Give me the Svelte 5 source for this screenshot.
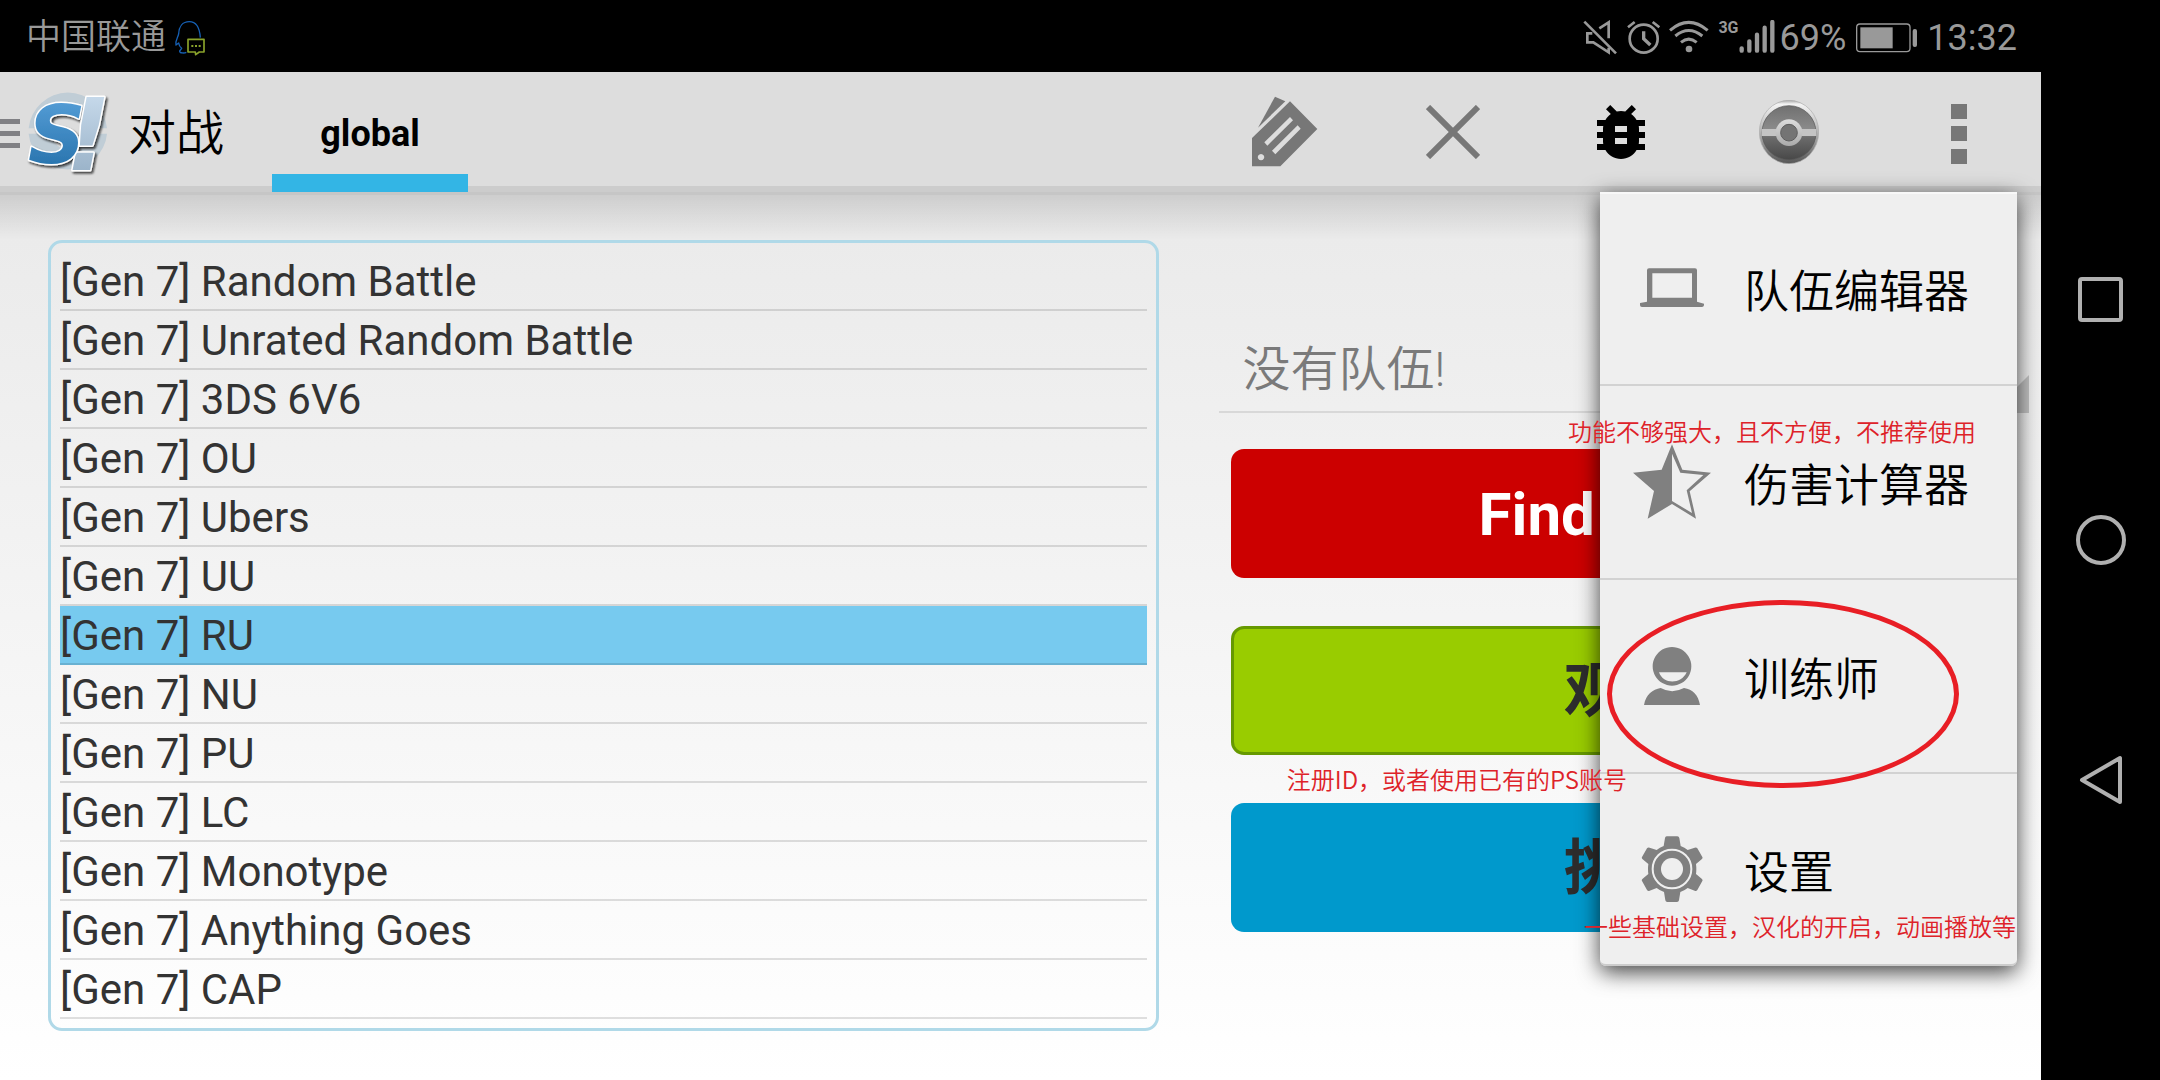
<script>
  const formats = [
    'Random Battle', 'Unrated Random Battle', '3DS 6V6', 'OU', 'Ubers', 'UU', 'RU',
    'NU', 'PU', 'LC', 'Monotype', 'Anything Goes', 'CAP'
  ];
  let selected = $state('RU');

  const menu = [
    { icon: 'laptop', label: '队伍编辑器' },
    { icon: 'star', label: '伤害计算器' },
    { icon: 'person', label: '训练师' },
    { icon: 'gear', label: '设置' }
  ];
</script>

<div class="device">
  <div class="screen">
    <header class="status">
      <div class="carrier">
        <span>中国联通</span>
        <svg width="32" height="36" viewBox="525 57 96 108" fill="none" stroke-linejoin="round">
          <path d="M604 110C602 80 592 62 571 62C550 62 540 78 539 98C538 108 528 118 531 132L539 126C540 134 543 138 548 142L542 150C541 157 556 157 562 154" stroke="#1660b4" stroke-width="4" />
          <path d="M567 115H615V153H601L590 161L589 153H567Z" stroke="#8aa32b" stroke-width="5" />
          <path d="M577 135h6M588 135h6M599 135h6" stroke="#8aa32b" stroke-width="6" />
        </svg>
      </div>
      <div class="indicators">
        <svg width="34" height="36" viewBox="137 57 102 108" fill="none" stroke="#999" stroke-width="8">
          <path d="M141 62L236 157" />
          <path d="M165 97H150V124H168L214 154V140M186 82L214 64V112" />
        </svg>
        <svg class="alarm" width="34" height="36" viewBox="269 57 102 108" fill="none" stroke="#999" stroke-width="8">
          <circle cx="319" cy="113" r="42" />
          <path d="M319 91V113L339 132" stroke-width="10" />
          <path d="M272 79L292 63M346 63L366 79" />
        </svg>
        <svg class="wifi" width="40" height="36" viewBox="397 57 120 108" fill="none" stroke="#999" stroke-width="9">
          <path d="M400 88Q456 40 513 88M416 105Q456 72 497 105M433 124Q456 105 480 124" />
          <circle cx="457" cy="144" r="10" fill="#999" stroke="none" />
        </svg>
        <div class="mobile">
          <span class="net">3G</span>
          <svg width="36" height="36" viewBox="599 57 108 108" stroke="#999" stroke-width="13" stroke-linecap="round">
            <path d="M607 142V149M630 121V149M653 101V149M676 80V149M699 63V149" />
          </svg>
        </div>
        <span class="percent">69%</span>
        <svg class="battery" width="62" height="30" viewBox="949 68 186 90" fill="none">
          <rect x="951" y="71" width="160" height="83" rx="10" stroke="#999" stroke-width="4" />
          <rect x="962" y="81" width="97" height="63" fill="#999" />
          <rect x="1119" y="86" width="13" height="54" rx="6" fill="#999" />
        </svg>
        <time>13:32</time>
      </div>
    </header>

    <div class="bar">
      <button class="home" aria-label="Navigation">
        <svg width="20" height="30" viewBox="0 0 20 30" fill="#808084">
          <path d="M0 0H20V5H0ZM0 12H20V17H0ZM0 24H20V29H0Z" />
        </svg>
        <svg class="logo" width="86" height="86" viewBox="78 270 258 258">
          <defs>
            <linearGradient id="blue" x1="0" y1="0" x2="0" y2="1">
              <stop offset="0" stop-color="#5ba3dc" /><stop offset="1" stop-color="#1f6ba5" />
            </linearGradient>
            <linearGradient id="pale" x1="0" y1="0" x2="0" y2="1">
              <stop offset="0" stop-color="#d0e2f2" /><stop offset="1" stop-color="#8fa9c0" />
            </linearGradient>
            <filter id="drop" x="-20%" y="-20%" width="150%" height="150%">
              <feDropShadow dx="5" dy="6" stdDeviation="3" flood-color="#111" flood-opacity="0.8" />
            </filter>
          </defs>
          <path d="M86 388A118 118 0 0 1 321 388H250A47 47 0 0 0 156 388ZM86 404H156A47 47 0 0 0 250 404H321A118 118 0 0 1 86 404Z" fill="#c0cdd6" />
          <g class="mark" filter="url(#drop)" stroke="#fff" stroke-width="9" stroke-linejoin="round" paint-order="stroke">
            <text x="197" y="512" font-size="298" fill="url(#pale)">!</text>
            <text x="84" y="493" font-size="240" fill="url(#blue)">S</text>
          </g>
        </svg>
      </button>
      <h1>对战</h1>
      <button class="tab">global</button>
      <div class="actions">
        <button aria-label="Tags">
          <svg width="66" height="72" viewBox="156 80 198 216" fill="#777">
            <path d="M225 82L256 96L174 175Z" />
            <path fill-rule="evenodd" d="M270 96L352 179L241 291H156V206ZM270 143L193 219L202 229L279 153ZM293 168L216 244L226 255L302 178ZM183 254a9.500 9.500 0 1 0 .1 0Z" />
          </svg>
        </button>
        <button aria-label="Close">
          <svg width="54" height="54" viewBox="0 0 54 54" stroke="#777" stroke-width="6"><path d="M2 2L52 52M52 2L2 52" /></svg>
        </button>
        <button aria-label="Debug">
          <svg width="48" height="54" viewBox="4 3 16 18">
            <path d="M20 8h-2.810c-.45-.78-1.070-1.450-1.820-1.960L17 4.410 15.590 3l-2.170 2.170C12.960 5.060 12.490 5 12 5c-.49 0-.96.06-1.410.17L8.410 3 7 4.410l1.620 1.630C7.880 6.550 7.260 7.220 6.810 8H4v2h2.090c-.05.33-.09.66-.09 1v1H4v2h2v1c0 .34.04.67.09 1H4v2h2.810c1.040 1.790 2.970 3 5.190 3s4.150-1.210 5.190-3H20v-2h-2.090c.05-.33.09-.66.09-1v-1h2v-2h-2v-1c0-.34-.04-.67-.09-1H20V8zm-6 8h-4v-2h4v2zm0-4h-4v-2h4v2z" />
          </svg>
        </button>
        <button aria-label="Battle">
          <svg width="60" height="64" viewBox="657 299 180 192">
            <defs>
              <linearGradient id="rim" x1="0" y1="0" x2="0" y2="1">
                <stop offset="0" stop-color="#aaa" /><stop offset=".06" stop-color="#f4f4f4" />
                <stop offset=".5" stop-color="#b5b5b5" /><stop offset="1" stop-color="#555" />
              </linearGradient>
              <linearGradient id="ball" x1="0" y1="0" x2="0" y2="1">
                <stop offset="0" stop-color="#707070" /><stop offset=".45" stop-color="#8c8c8c" />
                <stop offset=".6" stop-color="#6a6a6a" /><stop offset="1" stop-color="#484848" />
              </linearGradient>
              <linearGradient id="band" x1="0" y1="0" x2="0" y2="1">
                <stop offset="0" stop-color="#ddd" /><stop offset="1" stop-color="#aaa" />
              </linearGradient>
            </defs>
            <ellipse cx="747" cy="395" rx="89" ry="95" fill="url(#rim)" stroke="#aaa" stroke-width="2" />
            <circle cx="747" cy="397" r="81" fill="url(#ball)" stroke="#555" stroke-width="2" />
            <rect x="665" y="386" width="164" height="21" fill="#c4c4c4" />
            <circle cx="747" cy="397" r="40" fill="url(#band)" />
            <circle cx="747" cy="397" r="25" fill="#747474" stroke="#5e5e5e" stroke-width="3" />
          </svg>
        </button>
        <button aria-label="More options">
          <svg width="20" height="64" viewBox="-4 -4 20 64" fill="#777"><path d="M0 0H16V15H0ZM0 22H16V37H0ZM0 45H16V60H0Z" /></svg>
        </button>
      </div>

      <div class="menu">
        {#each menu as item}
          <button class="item">
            <span class="icon">
              {#if item.icon === 'laptop'}
                <svg width="64" height="40" viewBox="180 265 192 120" fill="#808080">
                  <path fill-rule="evenodd" d="M201 272Q201 266 207 266H345Q351 266 351 272V366L372 372V377Q371 382 366 382H186Q180 382 180 377V370L201 366ZM217 281V354H336V281Z" />
                </svg>
              {:else if item.icon === 'star'}
                <svg width="78" height="76" viewBox="159 794 234 228">
                  <path fill="#808080" fill-rule="evenodd" d="M276 795L307 871L393 880L329 936L348 1018L276 974L203 1018L222 935L159 880L245 871ZM276 823V965L336 1001L320 933L370 887L301 880Z" />
                </svg>
              {:else if item.icon === 'person'}
                <svg width="56" height="58" viewBox="192 261 168 174" fill="#808080">
                  <path fill-rule="evenodd" d="M276 261A58 58 0 1 1 275.900 261ZM237 337C250 374 303 374 320 337Z" />
                  <path d="M192 435C198 403 218 388 242 384Q276 403 312 384C338 388 355 405 360 435Z" />
                </svg>
              {:else}
                <svg width="62" height="66" viewBox="183 830 186 198">
                  <path fill="#808080" d="M260 831H292Q297 831 298 836L302 860Q314 865 323 872L344 865Q349 863 352 867L367 893Q369 897 365 900L348 914Q350 929 348 944L365 958Q369 961 367 965L352 992Q349 996 344 994L323 986Q313 994 301 998L297 1023Q296 1028 291 1028H262Q257 1028 256 1023L252 998Q240 994 230 986L209 994Q204 996 201 992L186 965Q184 961 188 958L205 944Q203 929 205 914L188 900Q184 897 186 893L201 867Q204 863 209 865L230 872Q239 865 251 860L255 836Q256 831 260 831Z" />
                  <circle cx="276" cy="929" r="58" fill="none" stroke="#efefef" stroke-width="6" />
                  <circle cx="276" cy="929" r="33" fill="#efefef" />
                </svg>
              {/if}
            </span>
            {item.label}
          </button>
        {/each}
        <p class="note calc">功能不够强大，且不方便，不推荐使用</p>
        <p class="note account">注册ID，或者使用已有的PS账号</p>
        <p class="note basics">一些基础设置，汉化的开启，动画播放等</p>
        <div class="ring"></div>
      </div>
    </div>

    <main>
      <ul class="formats">
        {#each formats as name}
          <li>
            <button class:active={selected === name} onclick={() => (selected = name)}>[Gen 7] {name}</button>
          </li>
        {/each}
      </ul>
      <section class="play">
        <div class="team">
          <select aria-label="队伍"><option>没有队伍!</option></select>
        </div>
        <div class="buttons">
          <button class="find">Find Battle</button>
          <button class="watch">观战</button>
          <button class="challenge">挑战</button>
        </div>
      </section>
    </main>
  </div>

  <nav>
    <button aria-label="Recent apps"><svg width="50" height="50" viewBox="0 0 50 50"><rect x="4" y="4" width="41" height="41" rx="2" /></svg></button>
    <button aria-label="Home"><svg width="50" height="50" viewBox="0 0 50 50"><circle cx="25" cy="25" r="23" /></svg></button>
    <button aria-label="Back"><svg width="50" height="50" viewBox="0 0 50 50"><path d="M6 25L44 3V47Z" stroke-linejoin="round" /></svg></button>
  </nav>
</div>

<style>
  :global(body) { margin: 0; background: #000; }
  * { box-sizing: border-box; }
  svg { display: block; flex: none; }
  button {
    border: 0; padding: 0; margin: 0; background: none; color: inherit;
    font: inherit; cursor: pointer;
  }
  .device {
    display: flex; min-height: 100vh; background: #000;
    font-family: Roboto, "Noto Sans CJK SC", sans-serif;
  }
  .screen { flex: 1; min-width: 0; display: flex; flex-direction: column; }

  .status {
    height: 72px; padding: 4px 24px 0 26px; display: flex; align-items: center;
    justify-content: space-between; color: #999; font-size: 36px; line-height: 40px;
  }
  .carrier, .indicators { display: flex; align-items: center; }
  .carrier { gap: 8px; font-size: 35px; font-weight: 350; }
  .alarm { margin-left: 10px; }
  .wifi { margin-left: 8px; }
  .mobile { display: flex; margin-left: 9px; }
  .net { font-size: 16px; line-height: 16px; font-weight: 700; }
  .percent { margin-left: 5px; }
  .battery { margin: 0 9px 0 10px; }

  .bar {
    position: relative; z-index: 1; height: 123px; display: flex; align-items: stretch;
    background: #ddd; border-bottom: 3px solid #c6c6c6; box-shadow: inset 0 -6px #ccc;
  }
  .home { display: flex; align-items: center; gap: 6px; }
  .home svg:first-child { margin-top: 4px; }
  .logo { overflow: visible; }
  .mark { font-family: "DejaVu Sans"; font-weight: 700; font-style: oblique; }
  h1 { margin: 0 48px 0 16px; padding-top: 4px; font-size: 48px; line-height: 116px; font-weight: 350; }
  .tab {
    height: 120px; width: 196px; border-bottom: 18px solid #33b5e5;
    padding-top: 22px; font-size: 36px; font-weight: 700; line-height: 72px;
  }
  .actions { margin-left: auto; display: flex; }
  .actions button { width: 168px; display: grid; place-items: center; }

  .menu {
    position: absolute; right: 24px; top: 120px; width: 417px; color: #000;
    background: #efefef; border-radius: 0 0 6px 6px;
    box-shadow: 0 6px 22px rgba(0, 0, 0, .75), inset 0 2px #f8f8f8;
  }
  .item {
    display: flex; align-items: center; width: 100%; height: 194px;
    border-bottom: 2px solid #d2d2d2; font-size: 45px; font-weight: 350; text-align: left;
  }
  .item:nth-child(4) { border-radius: 0 0 6px 6px; height: 192px; border-color: #ccc; }
  .icon { width: 144px; display: grid; place-items: center; }
  .note {
    position: absolute; margin: 0; white-space: nowrap; color: #de2229;
    font: 350 24px/32px "Noto Sans CJK SC", sans-serif;
  }
  .calc { left: -32px; top: 223px; }
  .account { right: 390px; top: 571px; }
  .basics { right: 1px; top: 718px; }
  .ring {
    position: absolute; left: 7px; top: 408px; width: 352px; height: 188px;
    border: 5px solid #e81e25; border-radius: 50%; pointer-events: none;
  }

  main {
    flex: 1; display: grid; grid-template-columns: 37fr 27fr; column-gap: 60px;
    align-items: start; padding: 45px 12px 48px 48px;
    background:
      linear-gradient(rgba(0, 0, 0, .12), transparent 45px),
      linear-gradient(#eaeaea, #fff);
  }
  .formats {
    margin: 0; padding: 9px; list-style: none; border: 3px solid #b0d9e8; border-radius: 14px;
  }
  li button {
    display: block; width: 100%; height: 59px; padding-top: 3px; text-align: left;
    border-bottom: 2px solid rgba(0, 0, 0, .12); color: #333; font-size: 42px; line-height: 54px;
  }
  li .active { background: #77caef; }
  .play { align-self: center; }
  .team { position: relative; }
  .team::after {
    content: ""; position: absolute; right: 0; bottom: 0; border: 19px solid #c3c3c3;
    border-top-color: transparent; border-left-color: transparent;
  }
  select {
    appearance: none; display: block; width: 100%; height: 72px; padding: 0 24px 12px;
    border: 0; border-bottom: 2px solid #d8d8d8; border-radius: 0; background: none;
    color: #7a7a7a; font: 350 48px/56px Roboto, "Noto Sans CJK SC", sans-serif;
  }
  .buttons { display: grid; gap: 48px; margin: 36px 12px 0; }
  .buttons button {
    height: 129px; padding-top: 4px; border-radius: 13px; color: #2d2d2d;
    font: 700 60px/80px Roboto, "Noto Sans CJK SC", sans-serif;
  }
  .buttons .find { background: #c00; color: #fff; }
  .buttons .watch { background: #9c0; border: 3px solid #690; }
  .buttons .challenge { background: #09c; }

  nav {
    width: 119px; display: flex; flex-direction: column; align-items: center;
    justify-content: center; gap: 190px;
  }
  nav svg { fill: none; stroke: #b0b0b0; stroke-width: 4; }
</style>
